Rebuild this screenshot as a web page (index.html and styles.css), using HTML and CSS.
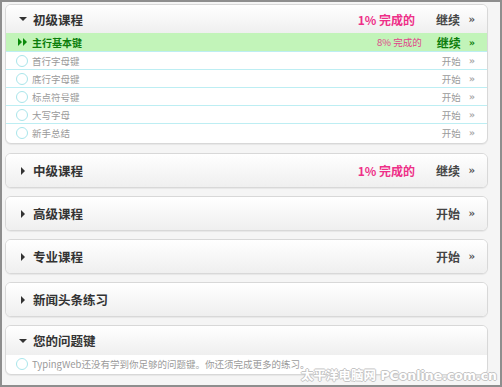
FILE: index.html
```html
<!DOCTYPE html>
<html lang="zh-CN">
<head>
    <meta charset="UTF-8">
    <title>TypingWeb 课程</title>
    <link rel="stylesheet" href="styles.css">
</head>
<body>
    <div class="frame">
        <div class="course">
            <div class="course-head">
                <span class="arrow-down"></span>
                <h2>初级课程</h2>
                <span class="progress">1% 完成的</span>
                <span class="action">继续</span>
                <span class="raquo">»</span>
            </div>
            <ul class="lessons">
                <li class="lesson current">
                    <span class="play"><i></i><i></i></span>
                    <span class="lesson-name">主行基本键</span>
                    <span class="lesson-progress">8% 完成的</span>
                    <span class="lesson-action">继续</span>
                    <span class="raquo">»</span>
                </li>
                <li class="lesson">
                    <span class="dot"></span>
                    <span class="lesson-name">首行字母键</span>
                    <span class="lesson-action">开始</span>
                    <span class="raquo">»</span>
                </li>
                <li class="lesson">
                    <span class="dot"></span>
                    <span class="lesson-name">底行字母键</span>
                    <span class="lesson-action">开始</span>
                    <span class="raquo">»</span>
                </li>
                <li class="lesson">
                    <span class="dot"></span>
                    <span class="lesson-name">标点符号键</span>
                    <span class="lesson-action">开始</span>
                    <span class="raquo">»</span>
                </li>
                <li class="lesson">
                    <span class="dot"></span>
                    <span class="lesson-name">大写字母</span>
                    <span class="lesson-action">开始</span>
                    <span class="raquo">»</span>
                </li>
                <li class="lesson">
                    <span class="dot"></span>
                    <span class="lesson-name">新手总结</span>
                    <span class="lesson-action">开始</span>
                    <span class="raquo">»</span>
                </li>
            </ul>
        </div>

        <div class="course closed">
            <div class="course-head">
                <span class="arrow-right"></span>
                <h2>中级课程</h2>
                <span class="progress">1% 完成的</span>
                <span class="action">继续</span>
                <span class="raquo">»</span>
            </div>
        </div>

        <div class="course closed">
            <div class="course-head">
                <span class="arrow-right"></span>
                <h2>高级课程</h2>
                <span class="action">开始</span>
                <span class="raquo">»</span>
            </div>
        </div>

        <div class="course closed">
            <div class="course-head">
                <span class="arrow-right"></span>
                <h2>专业课程</h2>
                <span class="action">开始</span>
                <span class="raquo">»</span>
            </div>
        </div>

        <div class="course closed">
            <div class="course-head">
                <span class="arrow-right"></span>
                <h2>新闻头条练习</h2>
            </div>
        </div>

        <div class="course problem">
            <div class="course-head">
                <span class="arrow-down"></span>
                <h2>您的问题键</h2>
            </div>
            <ul class="lessons">
                <li class="lesson note">
                    <span class="dot"></span>
                    <span class="lesson-name">TypingWeb还没有学到你足够的问题键。你还须完成更多的练习。</span>
                </li>
            </ul>
        </div>

        <div class="watermark">太平洋电脑网 PConline.com.cn</div>
    </div>
</body>
</html>
```

FILE: styles.css
```css
:root {
    --pink: #ee2f88;
    --green: #0b7d0b;
    --title: #333333;
    --muted: #9a9a9a;
    --line: #bdeef3;
    --panel-border: #d8d8d8;
}

* {
    box-sizing: border-box;
    margin: 0;
    padding: 0;
}

body {
    font-family: "Noto Sans CJK SC", "DejaVu Sans", sans-serif;
    background: #ffffff;
}

.frame {
    position: relative;
    width: 502px;
    height: 387px;
    border: 2px solid #8e8e8e;
    background: #f5f5f5;
    padding: 2px 0 0 3px;
    overflow: hidden;
}

.course {
    width: 483px;
    margin-bottom: 8px;
    border: 1px solid var(--panel-border);
    border-radius: 6px;
    background: #ffffff;
    box-shadow: 0 1px 1px rgba(0, 0, 0, 0.06);
    overflow: hidden;
}

.course:first-child {
    margin-bottom: 9px;
}

.course-head {
    display: flex;
    align-items: center;
    height: 28px;
    padding: 0 12px 0 13px;
    background: linear-gradient(#ffffff, #efefef);
}

.closed .course-head {
    height: 33px;
}

.problem .course-head {
    height: 29px;
}

.course-head h2 {
    flex: 1;
    margin-left: 6px;
    font-size: 12.5px;
    font-weight: 700;
    color: var(--title);
}

.arrow-down {
    width: 0;
    height: 0;
    border-left: 4px solid transparent;
    border-right: 4px solid transparent;
    border-top: 4px solid #333;
}

.arrow-right {
    width: 0;
    height: 0;
    margin-left: 2px;
    margin-right: 2px;
    border-top: 4px solid transparent;
    border-bottom: 4px solid transparent;
    border-left: 4px solid #333;
}

.progress {
    font-size: 12px;
    font-weight: 700;
    color: var(--pink);
    margin-right: 21px;
}

.action {
    font-size: 12px;
    font-weight: 700;
    color: #444;
}

.raquo {
    margin-left: 8px;
    font-family: "DejaVu Serif", serif;
    font-size: 11px;
    font-weight: 700;
    color: #555;
}

.lessons {
    list-style: none;
    padding-bottom: 2px;
}

.lesson {
    display: flex;
    align-items: center;
    height: 18px;
    padding: 0 12px 0 10px;
    border-top: 1px solid var(--line);
}

.lesson.current {
    border-top: none;
    background: #c2f4b9;
}

.lesson.note {
    border-top: none;
    height: 17px;
}

.dot {
    width: 12px;
    height: 12px;
    border: 1px solid #a9e5ea;
    border-radius: 50%;
}

.play {
    display: flex;
    width: 12px;
    padding-left: 2px;
}

.play i {
    width: 0;
    height: 0;
    border-top: 4px solid transparent;
    border-bottom: 4px solid transparent;
    border-left: 4px solid #0a8a0a;
    margin-right: 1px;
}

.lesson-name {
    flex: 1;
    margin-left: 4px;
    font-size: 9.5px;
    color: var(--muted);
    white-space: nowrap;
}

.current .lesson-name {
    font-size: 10px;
    font-weight: 700;
    color: var(--green);
}

.lesson-progress {
    font-size: 9.5px;
    color: #e0458a;
    margin-right: 15px;
}

.lesson-action {
    font-size: 9.5px;
    color: var(--muted);
}

.current .lesson-action {
    font-size: 12px;
    font-weight: 700;
    color: var(--green);
}

.lesson .raquo {
    font-size: 10px;
    color: #aaa;
}

.current .raquo {
    color: var(--green);
}

.watermark {
    position: absolute;
    right: 3px;
    bottom: 1px;
    font-family: "DejaVu Sans", "Noto Sans CJK SC", sans-serif;
    font-size: 12.5px;
    font-weight: 700;
    color: #ffffff;
    text-shadow: -1px 0 #c4c4c4, 1px 0 #c4c4c4, 0 -1px #c4c4c4, 0 1px #c4c4c4;
    white-space: nowrap;
}
```
